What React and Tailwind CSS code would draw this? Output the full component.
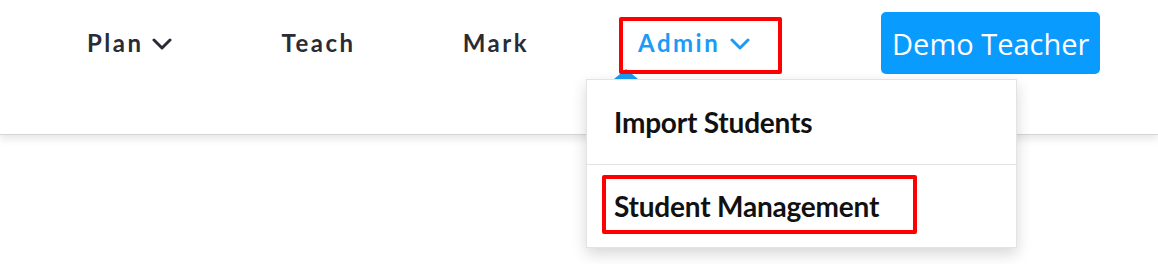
import React from "react";

function Chevron({ className }) {
  return (
    <svg viewBox="0 0 20 12" className={className} fill="none" stroke="currentColor" strokeWidth="3" strokeLinecap="round" strokeLinejoin="round">
      <path d="M2 2 L10 10 L18 2" />
    </svg>
  );
}

export default function App() {
  return (
    <div className="relative w-[1158px] h-[264px] bg-white overflow-hidden" style={{ fontFamily: "Lato, 'Noto Sans', sans-serif" }}>
      <header className="relative h-[135px] bg-white border-b border-[#d6d6d6] shadow-[0_4px_8px_rgba(0,0,0,0.10)]">
        <nav className="flex items-center h-[86px] pl-[87px]">
          <div className="flex items-center text-[#2b2b36] font-bold text-[24px] tracking-[2.5px]">
            <span>Plan</span>
            <Chevron className="w-[20px] h-[12px] ml-[8px] mt-[1px]" />
          </div>
          <span className="ml-[110px] text-[#2b2b36] font-bold text-[24px] tracking-[2.5px]">Teach</span>
          <span className="ml-[107px] text-[#2b2b36] font-bold text-[24px] tracking-[2.5px]">Mark</span>
          <div className="ml-[109px] flex items-center text-[#1a9bf6] font-bold text-[24px] tracking-[2.5px]">
            <span>Admin</span>
            <Chevron className="w-[20px] h-[12px] ml-[10px] mt-[1px]" />
          </div>
          <button className="ml-[131px] h-[62px] w-[219px] rounded-[5px] bg-[#0a9bff] text-white text-[29px] leading-none" style={{ fontFamily: "'Open Sans', sans-serif" }}>
            Demo Teacher
          </button>
        </nav>
      </header>

      {/* dropdown caret */}
      <svg className="absolute left-[614px] top-[68px] w-[24px] h-[11px]" viewBox="0 0 24 11">
        <path d="M0 11 L12 1 L24 11 Z" fill="#1a9bf6" />
      </svg>

      {/* dropdown menu */}
      <div className="absolute left-[586px] top-[79px] w-[431px] bg-white border border-[#e3e3e3] shadow-[0_6px_14px_rgba(0,0,0,0.16)]">
        <div className="h-[84px] flex items-center pl-[27px] text-[28px] font-bold text-[#111] tracking-[-0.2px]">
          Import Students
        </div>
        <div className="h-[1px] bg-[#e3e3e3]" />
        <div className="h-[82px] flex items-center pl-[27px] text-[28px] font-bold text-[#111] tracking-[-0.2px]">
          Student Management
        </div>
      </div>

      {/* annotation boxes */}
      <div className="absolute left-[619px] top-[17px] w-[163px] h-[57px] border-[4px] border-[#ff0000] rounded-[2px]" />
      <div className="absolute left-[602px] top-[175px] w-[315px] h-[59px] border-[4px] border-[#ff0000] rounded-[2px]" />
    </div>
  );
}
